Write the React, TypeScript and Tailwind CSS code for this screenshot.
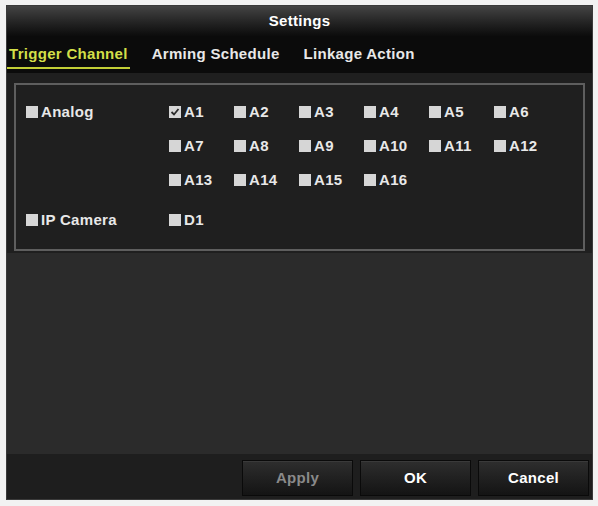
const channels = [
  ["A1", "A2", "A3", "A4", "A5", "A6"],
  ["A7", "A8", "A9", "A10", "A11", "A12"],
  ["A13", "A14", "A15", "A16"],
]

function Box({ checked = false }: { checked?: boolean }) {
  return (
    <span className="flex h-[12px] w-[12px] shrink-0 items-center justify-center bg-[#d6d6d6]">
      {checked && (
        <svg viewBox="0 0 12 12" className="h-[12px] w-[12px]">
          <path d="M2.5 6 L5 8.5 L9.5 3" fill="none" stroke="#2a2a2a" strokeWidth="1.8" />
        </svg>
      )}
    </span>
  )
}

function Item({ label, checked = false }: { label: string; checked?: boolean }) {
  return (
    <div className="flex w-[65px] items-center gap-[3px]">
      <Box checked={checked} />
      <span>{label}</span>
    </div>
  )
}

export default function App() {
  return (
    <div
      className="h-[506px] w-[598px] bg-[#f2f2f2] pl-[6px] pt-[5px]"
      style={{ fontFamily: '"Liberation Sans", Arial, sans-serif' }}
    >
      <div className="flex h-[495px] w-[587px] flex-col border border-[#3a3a3a] bg-[#2a2a2a] text-[15px] leading-[18px] font-bold tracking-[0.3px] text-[#e8e8e8]">
        {/* Title */}
        <div className="flex h-[30px] items-center justify-center bg-gradient-to-b from-[#444444] to-[#0c0c0c] text-white">
          Settings
        </div>

        {/* Tabs */}
        <div className="flex h-[37px] items-start bg-[#0b0b0b] pt-[9px] text-[15px]">
          <div className="flex gap-[22px]">
            <div className="border-b-2 border-[#c3cf36] px-[2px] pb-[4px] text-[#d3df48]">Trigger Channel</div>
            <div>Arming Schedule</div>
            <div className="pl-[2px]">Linkage Action</div>
          </div>
        </div>

        {/* Content */}
        <div className="flex flex-1 flex-col bg-[#2b2b2b]">
          <div className="bg-[#1f1f1f] px-[7px] pt-[10px] pb-[2px]">
            <div className="flex h-[168px] flex-col border-2 border-[#5e5e5e] bg-[#1f1f1f] pl-[10px] pt-[17px]">
              <div className="flex">
                <div className="flex h-[19px] w-[143px] items-center gap-[3px]">
                  <Box />
                  <span>Analog</span>
                </div>
                <div className="flex flex-col gap-[15px]">
                  {channels.map((row, i) => (
                    <div key={i} className="flex h-[19px]">
                      {row.map((c) => (
                        <Item key={c} label={c} checked={c === "A1"} />
                      ))}
                    </div>
                  ))}
                </div>
              </div>
              <div className="mt-[21px] flex h-[19px]">
                <div className="flex w-[143px] items-center gap-[3px]">
                  <Box />
                  <span>IP Camera</span>
                </div>
                <Item label="D1" />
              </div>
            </div>
          </div>
          <div className="flex-1" />
          {/* Buttons */}
          <div className="flex h-[45px] justify-end gap-[7px] bg-[#1e1e1e] pr-[3px] pt-[6px]">
            {[
              { t: "Apply", dim: true },
              { t: "OK", dim: false },
              { t: "Cancel", dim: false },
            ].map((b) => (
              <div
                key={b.t}
                className={`flex h-[36px] w-[111px] items-center justify-center border border-[#0a0a0a] bg-gradient-to-b from-[#2e2e2e] to-[#141414] shadow-[inset_0_1px_0_#3a3a3a] ${b.dim ? "text-[#8a8a8a]" : "text-white"}`}
              >
                {b.t}
              </div>
            ))}
          </div>
        </div>
      </div>
    </div>
  )
}
